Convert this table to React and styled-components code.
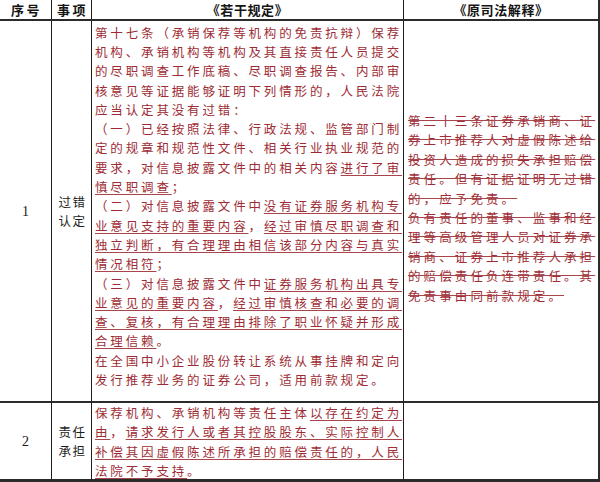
import styled, { createGlobalStyle } from "styled-components";

const GlobalStyle = createGlobalStyle`
  html, body {
    margin: 0;
    padding: 0;
    background: #fff;
  }
  body {
    font-family: "Noto Sans CJK SC", "Noto Sans", sans-serif;
  }
`;

// [..] marks the underlined part of a line
const newRule = [
  "第十七条（承销保荐等机构的免责抗辩）保荐",
  "机构、承销机构等机构及其直接责任人员提交",
  "的尽职调查工作底稿、尽职调查报告、内部审",
  "核意见等证据能够证明下列情形的，人民法院",
  "应当认定其没有过错：",
  "（一）已经按照法律、行政法规、监管部门制",
  "定的规章和规范性文件、相关行业执业规范的",
  "要求，对信息披露文件中的相关内容[进行了审]",
  "[慎尽职调查]；",
  "（二）对信息披露文件中[没有证券服务机构专]",
  "[业意见支持的重要内容]，[经过审慎尽职调查和]",
  "[独立判断，有合理理由相信该部分内容与真实]",
  "[情况相符]；",
  "（三）对信息披露文件中[证券服务机构出具专]",
  "[业意见的重要内容]，[经过审慎核查和必要的调]",
  "[查、复核，有合理理由排除了职业怀疑并形成]",
  "[合理信赖]。",
  "在全国中小企业股份转让系统从事挂牌和定向",
  "发行推荐业务的证券公司，适用前款规定。",
];

const oldRule = [
  "第二十三条证券承销商、证",
  "券上市推荐人对虚假陈述给",
  "投资人造成的损失承担赔偿",
  "责任。但有证据证明无过错",
  "的，应予免责。",
  "负有责任的董事、监事和经",
  "理等高级管理人员对证券承",
  "销商、证券上市推荐人承担",
  "的赔偿责任负连带责任。其",
  "免责事由同前款规定。",
];

const rows = [
  {
    no: "1",
    item: ["过错", "认定"],
    lines: newRule,
    old: oldRule,
    shift: true,
  },
  {
    no: "2",
    item: ["责任", "承担"],
    lines: [
      "保荐机构、承销机构等责任主体[以存在约定为]",
      "[由]，[请求发行人或者其控股股东、实际控制人]",
      "[补偿其因虚假陈述所承担的赔偿责任的，人民]",
      "[法院不予支持]。",
    ],
    old: [],
  },
];

function renderLine(text) {
  return text
    .split(/(\[[^\]]*\])/)
    .filter(Boolean)
    .map((part, i) =>
      part.startsWith("[") ? <U key={i}>{part.slice(1, -1)}</U> : <span key={i}>{part}</span>
    );
}

export default function App() {
  return (
    <>
      <GlobalStyle />
      <Table>
        <Head>序号</Head>
        <Head>事项</Head>
        <Head tight>《若干规定》</Head>
        <Head tight>《原司法解释》</Head>

        {rows.map((row) => (
          <Row key={row.no}>
            <NoCell>{row.no}</NoCell>
            <ItemCell>
              {row.item.map((t) => (
                <div key={t}>{t}</div>
              ))}
            </ItemCell>
            <TextCell shift={row.shift}>
              {row.lines.map((l, i) => (
                <Line key={i}>{renderLine(l)}</Line>
              ))}
            </TextCell>
            <OldCell>
              {row.old.map((l, i) => (
                <Line key={i}>
                  <S>{l}</S>
                </Line>
              ))}
            </OldCell>
          </Row>
        ))}
      </Table>
    </>
  );
}

/* ================= STYLES ================= */
const Table = styled.div`
  display: grid;
  grid-template-columns: 51px 40px 312px 195px;
  grid-template-rows: 21px 382px 78px;
  width: 600px;
  box-sizing: border-box;
  border-right: 2px solid #2b2b2b;
  border-bottom: 2px solid #2b2b2b;
`;

const Row = styled.div`
  display: contents;
`;

const Cell = styled.div`
  box-sizing: border-box;
  border-left: 1px solid #1e1e1e;
  border-bottom: 2px solid #2b2b2b;
  display: flex;
  flex-direction: column;
  justify-content: center;
  min-width: 0;
  overflow: hidden;
`;

const Head = styled(Cell)`
  align-items: center;
  font-size: 13px;
  font-weight: 700;
  color: #151515;
  letter-spacing: ${(p) => (p.tight ? "0.6px" : "2.4px")};
  padding-left: ${(p) => (p.tight ? "0" : "2px")};
  line-height: 19px;
  white-space: nowrap;

  &:first-child {
    border-left: none;
  }
`;

const NoCell = styled(Cell)`
  border-left: none;
  align-items: center;
  font-family: "Liberation Serif", "DejaVu Serif", serif;
  font-size: 14px;
  color: #1a1a1a;
  padding-top: 2px;
`;

const ItemCell = styled(Cell)`
  align-items: center;
  font-size: 12.5px;
  letter-spacing: 1.6px;
  padding-left: 2px;
  color: #1f1f1f;
  line-height: 19px;
`;

const TextCell = styled(Cell)`
  padding: ${(p) => (p.shift ? "0 0 10px 3px" : "1px 0 0 3px")};
  font-size: 12.5px;
  letter-spacing: 2.85px;
  line-height: 19.3px;
  color: #9e2c34;
`;

const OldCell = styled(Cell)`
  padding: 0 0 6px 4px;
  font-size: 12.5px;
  letter-spacing: 3.1px;
  line-height: 19.4px;
  color: #9e2c34;
`;

const Line = styled.div`
  white-space: nowrap;
`;

const U = styled.span`
  text-decoration: underline;
  text-decoration-color: #a8454b;
  text-underline-offset: 2px;
`;

const S = styled.span`
  text-decoration: line-through;
  text-decoration-color: #a8454b;
`;
